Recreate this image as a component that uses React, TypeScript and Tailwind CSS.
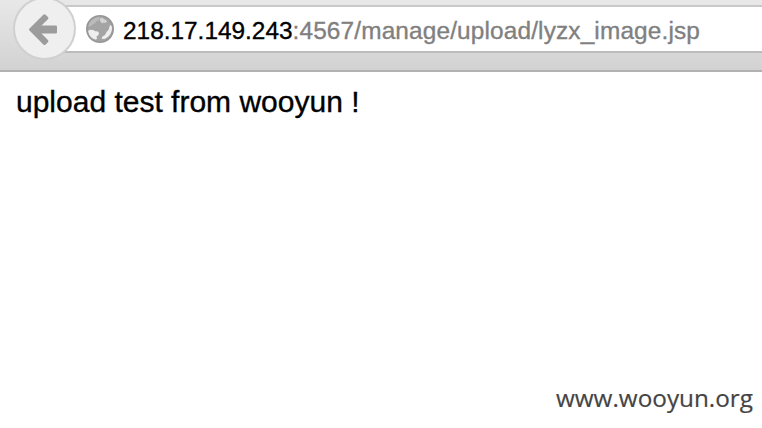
function BackArrow() {
  return (
    <svg className="h-[32px] w-[30px]" viewBox="28 12.500 30 32" fill="#9c9c9c">
      <path d="M42.300 14.200q1.200-1 2.300 0l2.300 2.300q1 1.200 0 2.300L40.500 25h14.300q1.200 0 1.200 1.200v5.600q0 1.200-1.200 1.200H40.500l6.400 6.500q1 1.100 0 2.300l-2.300 2.300q-1.100 1-2.300 0L28.500 30q-1-1 0-2z" />
    </svg>
  );
}

function Globe() {
  return (
    <svg className="h-[30px] w-[30px] shrink-0" viewBox="85 14 30 30">
      <circle cx="100" cy="29" r="13" fill="#a4a4a4" />
      <path d="M88.500 24.500c1.500-4 4.500-7 9-8l3 .7-2 1.800.5 1.500-3 1-1 2-2.500 1-1.500 1.500-2.500.5z" fill="#bababa" />
      <path d="M88 31l2-1.200 3 .2 2.500 1.200 2.500.3 1 1.500-.5 2-2 1.500.5 2.500-1.500.5c-4.500-1-7.200-4.300-7.500-8.500z" fill="#eeeeee" />
      <path d="M99.500 18.500l3-.8 1.500 1.500 2 .8 1 1.800-1.500 1.200-2-.5-1 1-2-1.500z" fill="#d4d4d4" />
      <path d="M110 25l1.800 1c.8 4-.8 8.500-4 11l-3.300 2-3-.3 1-2.200 2.500-1.500 1.500-3 2-2z" fill="#eeeeee" />
      <circle cx="100" cy="29" r="13.100" fill="none" stroke="#989898" strokeWidth="1.800" />
    </svg>
  );
}

export default function App() {
  return (
    <div className="flex h-[428px] w-full flex-col overflow-hidden bg-white font-['Liberation_Sans',Arial,sans-serif]">
      <header className="flex h-[72px] shrink-0 items-start overflow-hidden border-b-2 border-[#b1b1b1] bg-linear-to-b from-[#e8e8e8] to-[#d2d2d2] pl-[13px]">
        <button className="z-10 -mt-[3px] flex h-[63px] w-[63px] shrink-0 items-center justify-center rounded-full border-2 border-[#d0d0d0] bg-[#efefef] pr-[2px]">
          <BackArrow />
        </button>
        <div className="mt-[5px] -ml-[12px] flex h-[48px] flex-1 items-center border-y-2 border-t-[#c9c9c9] border-b-[#bcbcbc] bg-white pl-[21px]">
          <Globe />
          <div className="mt-[3px] ml-[8px] whitespace-nowrap text-[24.4px] leading-[30px] text-[#808080] [-webkit-text-stroke:0.35px]">
            <span className="text-black">218.17.149.243</span>
            <span className="tracking-[0.14px]">:4567/manage/upload/lyzx_image.jsp</span>
          </div>
        </div>
      </header>
      <main className="flex flex-1 flex-col justify-between">
        <p className="pt-[12px] pl-[16px] text-[30px] leading-[36px] text-black [-webkit-text-stroke:0.35px]">upload test from wooyun !</p>
        <p className="self-end pr-[9px] pb-[12px] font-['Open_Sans',sans-serif] text-[24.300px] leading-[36px] text-[#444] [-webkit-text-stroke:0.2px]">www.wooyun.org</p>
      </main>
    </div>
  );
}
